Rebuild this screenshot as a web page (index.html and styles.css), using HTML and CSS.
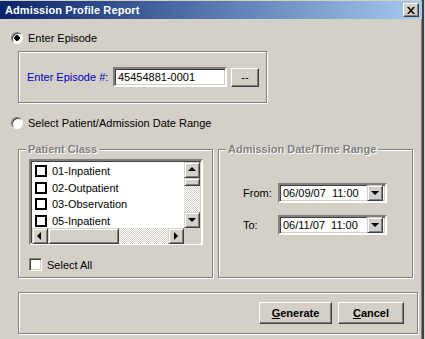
FILE: index.html
```html
<!DOCTYPE html>
<html>
	<head>
		<meta charset="UTF-8">
		<title>Admission Profile Report</title>
		<link rel="stylesheet" href="styles.css">
	</head>
	<body>
		<!--窗口-->
		<div class="window">
			<div class="titlebar">
				<span class="title">Admission Profile Report</span>
				<span class="close-btn">
					<svg width="8" height="7" viewBox="0 0 8 7"><path d="M0 0h2l2 2.5 2-2.5h2l-3 3.5 3 3.5h-2l-2-2.5-2 2.5h-2l3-3.5z" fill="#000"/></svg>
				</span>
			</div>
			<div class="client">
				<div class="radio-row first-radio">
					<span class="radio checked"></span>
					<span>Enter Episode</span>
				</div>
				<div class="group episode-group">
					<span class="field-label">Enter Episode #:</span>
					<span class="textbox">45454881-0001</span>
					<span class="btn dots-btn">--</span>
				</div>
				<div class="radio-row second-radio">
					<span class="radio"></span>
					<span>Select Patient/Admission Date Range</span>
				</div>
				<div class="range-row">
					<div class="group class-group">
						<span class="legend class-legend">Patient Class</span>
						<div class="listbox">
							<div class="list-main">
								<ul class="list-items">
									<li><span class="flat-check"></span>01-Inpatient</li>
									<li><span class="flat-check"></span>02-Outpatient</li>
									<li><span class="flat-check"></span>03-Observation</li>
									<li><span class="flat-check"></span>05-Inpatient</li>
								</ul>
								<div class="vscroll">
									<span class="sb-btn arrow-up"></span>
									<span class="sb-thumb v-thumb"></span>
									<span class="sb-track"></span>
									<span class="sb-btn arrow-down"></span>
								</div>
							</div>
							<div class="hscroll">
								<span class="sb-btn arrow-left"></span>
								<span class="sb-thumb h-thumb"></span>
								<span class="sb-track"></span>
								<span class="sb-btn arrow-right"></span>
								<span class="sb-corner"></span>
							</div>
						</div>
						<div class="check-row">
							<span class="checkbox"></span>
							<span>Select All</span>
						</div>
					</div>
					<div class="group date-group">
						<span class="legend date-legend">Admission Date/Time Range</span>
						<div class="date-row from-row">
							<span class="date-label">From:</span>
							<span class="combo"><span class="combo-text">06/09/07  11:00</span><span class="sb-btn arrow-down"></span></span>
						</div>
						<div class="date-row to-row">
							<span class="date-label">To:</span>
							<span class="combo"><span class="combo-text">06/11/07  11:00</span><span class="sb-btn arrow-down"></span></span>
						</div>
					</div>
				</div>
				<div class="group action-group">
					<span class="btn action-btn generate-btn"><u>G</u>enerate</span>
					<span class="btn action-btn cancel-btn"><u>C</u>ancel</span>
				</div>
			</div>
		</div>
	</body>
</html>
```

FILE: styles.css
```css
body,ul,li{
	margin: 0;
	padding: 0;
}
li{
	list-style: none;
}
body{
	background: #d4d0c8;
	font-family: "Liberation Sans", Arial, sans-serif;
	font-size: 11px;
	color: #000;
}
.window{
	width: 422px;
	height: 338px;
	padding-top: 1px;
	border-right: 2px solid #404040;
	border-bottom: 1px solid #808080;
	background: #d4d0c8;
	box-shadow: inset -1px 0 #808080;
}
/*标题栏*/
.titlebar{
	display: flex;
	align-items: center;
	justify-content: space-between;
	height: 18px;
	padding: 0 3px 0 5px;
	background: linear-gradient(to right, #0a246a, #a6caf0);
}
.title{
	color: #fff;
	font-weight: bold;
	font-size: 11px;
	letter-spacing: 0.1px;
}
.close-btn{
	display: flex;
	align-items: center;
	justify-content: center;
	width: 14px;
	height: 12px;
	background: #d4d0c8;
	border: 1px solid;
	border-color: #fff #404040 #404040 #fff;
	box-shadow: inset -1px -1px #808080;
}
.client{
	display: flex;
	flex-direction: column;
	padding-left: 18px;
}
/*单选*/
.radio-row{
	display: flex;
	align-items: center;
	height: 14px;
	margin-left: -7px;
}
.first-radio{
	margin-top: 12px;
}
.second-radio{
	margin-top: 13px;
}
.radio{
	box-sizing: border-box;
	width: 12px;
	height: 12px;
	margin-right: 5px;
	border-radius: 50%;
	border: 1px solid;
	border-color: #808080 #fff #fff #808080;
	background: #fff;
	box-shadow: inset 1px 1px #404040;
}
.radio.checked{
	background: radial-gradient(circle, #000 0 2.5px, #fff 3px);
}
/*分组框*/
.group{
	box-sizing: border-box;
	border: 1px solid #808080;
	box-shadow: inset 1px 1px #fff, 1px 1px #fff;
}
.legend{
	display: block;
	width: fit-content;
	margin-top: -7px;
	padding: 0 2px;
	height: 13px;
	line-height: 13px;
	background: #d4d0c8;
	color: #808080;
	font-weight: bold;
	text-shadow: 1px 1px #fff;
}
.class-legend{
	margin-left: -3px;
}
.date-legend{
	margin-left: -17px;
}
.episode-group{
	display: flex;
	align-items: center;
	width: 249px;
	height: 52px;
	margin-top: 6px;
	padding: 0 0 0 8px;
}
.field-label{
	color: #0000c0;
	width: 86px;
}
.textbox{
	box-sizing: border-box;
	width: 114px;
	height: 20px;
	line-height: 16px;
	padding-left: 3px;
	border: 2px solid;
	border-color: #808080 #fff #fff #808080;
	box-shadow: inset 1px 1px #404040, inset -1px -1px #d4d0c8;
	background: #fff;
}
.btn{
	box-sizing: border-box;
	display: flex;
	align-items: center;
	justify-content: center;
	border: 1px solid;
	border-color: #fff #404040 #404040 #fff;
	box-shadow: inset -1px -1px #808080;
	background: #d4d0c8;
}
.dots-btn{
	width: 28px;
	height: 19px;
	margin-left: 4px;
}
.range-row{
	display: flex;
	gap: 5px;
	margin-top: 19px;
}
.class-group{
	width: 195px;
	height: 129px;
	padding-left: 10px;
}
.date-group{
	width: 195px;
	height: 129px;
	padding-left: 24px;
}
/*列表框*/
.listbox{
	box-sizing: border-box;
	width: 174px;
	height: 86px;
	margin-top: 3px;
	border: 2px solid;
	border-color: #808080 #fff #fff #808080;
	box-shadow: inset 1px 1px #404040, inset -1px -1px #d4d0c8;
	background: #fff;
	display: flex;
	flex-direction: column;
	padding: 0 1px 1px 0;
}
.list-main{
	display: flex;
	height: 66px;
	margin-top: 1px;
	margin-left: 1px;
}
.list-items{
	flex: 1;
	overflow: hidden;
	padding-top: 1px;
}
.list-items li{
	display: flex;
	align-items: center;
	height: 16.5px;
	padding-left: 3px;
}
.flat-check{
	box-sizing: border-box;
	width: 12px;
	height: 12px;
	margin-right: 5px;
	border: 2px solid #000;
}
.vscroll{
	display: flex;
	flex-direction: column;
	width: 16px;
}
.hscroll{
	display: flex;
	height: 16px;
	margin-left: 1px;
}
.sb-btn{
	position: relative;
	box-sizing: border-box;
	flex: none;
	width: 16px;
	height: 16px;
	border: 1px solid;
	border-color: #d4d0c8 #404040 #404040 #d4d0c8;
	box-shadow: inset 1px 1px #fff, inset -1px -1px #808080;
	background: #d4d0c8;
}
.sb-btn:after{
	content: "";
	position: absolute;
	left: 50%;
	top: 50%;
	border: 4px solid transparent;
}
.arrow-up:after{
	border-bottom-color: #000;
	border-top-width: 0;
	margin: -3px 0 0 -4px;
}
.arrow-down:after{
	border-top-color: #000;
	border-bottom-width: 0;
	margin: -2px 0 0 -4px;
}
.arrow-left:after{
	border-right-color: #000;
	border-left-width: 0;
	margin: -4px 0 0 -3px;
}
.arrow-right:after{
	border-left-color: #000;
	border-right-width: 0;
	margin: -4px 0 0 -2px;
}
.sb-thumb{
	box-sizing: border-box;
	flex: none;
	border: 1px solid;
	border-color: #d4d0c8 #404040 #404040 #d4d0c8;
	box-shadow: inset 1px 1px #fff, inset -1px -1px #808080;
	background: #d4d0c8;
}
.v-thumb{
	height: 8px;
}
.h-thumb{
	width: 71px;
}
.sb-track{
	flex: 1;
	background: repeating-conic-gradient(#fff 0 25%, #d4d0c8 0 50%) 0 0 / 2px 2px;
}
.sb-corner{
	flex: none;
	width: 16px;
	background: #d4d0c8;
}
/*复选框*/
.check-row{
	display: flex;
	align-items: center;
	height: 13px;
	margin-top: 13px;
}
.checkbox{
	box-sizing: border-box;
	width: 13px;
	height: 13px;
	margin-right: 5px;
	border: 1px solid;
	border-color: #808080 #fff #fff #808080;
	box-shadow: inset 1px 1px #404040, inset -1px -1px #d4d0c8;
	background: #fff;
}
/*日期*/
.date-row{
	display: flex;
	align-items: center;
}
.from-row{
	margin-top: 27px;
}
.to-row{
	margin-top: 12px;
}
.date-label{
	width: 35px;
}
.combo{
	box-sizing: border-box;
	display: flex;
	align-items: center;
	width: 109px;
	height: 20px;
	padding: 0 2px 0 3px;
	border: 2px solid;
	border-color: #808080 #fff #fff #808080;
	box-shadow: inset 1px 1px #404040, inset -1px -1px #d4d0c8;
	background: #fff;
}
.combo-text{
	flex: 1;
	white-space: pre;
}
.action-group{
	display: flex;
	justify-content: flex-end;
	gap: 6px;
	width: 400px;
	height: 42px;
	margin-top: 14px;
	padding: 9px 13px 0 0;
}
.action-btn{
	height: 22px;
	font-weight: bold;
}
.generate-btn{
	width: 73px;
}
.cancel-btn{
	width: 66px;
}
```
